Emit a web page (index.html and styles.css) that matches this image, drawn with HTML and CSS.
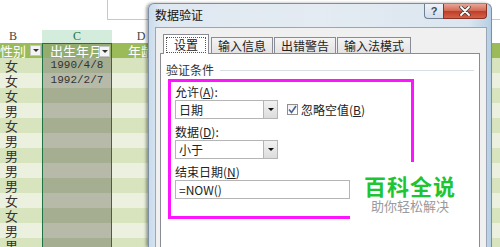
FILE: index.html
```html
<!DOCTYPE html>
<html lang="zh-CN">
<head>
    <meta charset="UTF-8">
    <title>数据验证</title>
    <link rel="stylesheet" href="styles.css">
</head>
<body>
    <div class="sheet">
        <div class="toparea"><div class="fxbox"></div></div>

        <div class="row colhead">
            <div class="cell letter-b">B</div>
            <div class="cell sel">C</div>
            <div class="cell">D</div>
            <div class="cell"></div>
        </div>

        <div class="row hdr">
            <div class="cell">性别<span class="drop"></span></div>
            <div class="cell sel"><span class="clip">出生年月</span><span class="drop"></span></div>
            <div class="cell">年龄</div>
            <div class="cell"></div>
        </div>

        <div class="row odd"><div class="cell">女</div><div class="cell sel date">1990/4/8</div><div class="cell"></div><div class="cell"></div></div>
        <div class="row"><div class="cell">女</div><div class="cell sel date">1992/2/7</div><div class="cell"></div><div class="cell"></div></div>
        <div class="row odd"><div class="cell">女</div><div class="cell sel"></div><div class="cell"></div><div class="cell"></div></div>
        <div class="row"><div class="cell">男</div><div class="cell sel"></div><div class="cell"></div><div class="cell"></div></div>
        <div class="row odd"><div class="cell">女</div><div class="cell sel"></div><div class="cell"></div><div class="cell"></div></div>
        <div class="row"><div class="cell">男</div><div class="cell sel"></div><div class="cell"></div><div class="cell"></div></div>
        <div class="row odd"><div class="cell">男</div><div class="cell sel"></div><div class="cell"></div><div class="cell"></div></div>
        <div class="row"><div class="cell">男</div><div class="cell sel"></div><div class="cell"></div><div class="cell"></div></div>
        <div class="row odd"><div class="cell">男</div><div class="cell sel"></div><div class="cell"></div><div class="cell"></div></div>
        <div class="row"><div class="cell">女</div><div class="cell sel"></div><div class="cell"></div><div class="cell"></div></div>
        <div class="row odd"><div class="cell">女</div><div class="cell sel"></div><div class="cell"></div><div class="cell"></div></div>
        <div class="row"><div class="cell">男</div><div class="cell sel"></div><div class="cell"></div><div class="cell"></div></div>
        <div class="row odd short"><div class="cell">男</div><div class="cell sel"></div><div class="cell"></div><div class="cell"></div></div>
    </div>

    <div class="dlg">
        <div class="titlebar">
            <span class="title">数据验证</span>
            <div class="tbtns">
                <span class="help">?</span>
                <span class="close">
                    <svg width="12" height="10" viewBox="0 0 12 10">
                        <path d="M2 1 L10 9 M10 1 L2 9" stroke="#3b3b3b" stroke-width="3.4" stroke-linecap="round"/>
                        <path d="M2 1 L10 9 M10 1 L2 9" stroke="#fff" stroke-width="1.8" stroke-linecap="round"/>
                    </svg>
                </span>
            </div>
        </div>
        <div class="client">
            <div class="tabs">
                <span class="tab on"><span class="focus">设置</span></span>
                <span class="tab">输入信息</span>
                <span class="tab">出错警告</span>
                <span class="tab">输入法模式</span>
            </div>
            <div class="panel">
                <div class="group"><span>验证条件</span><i class="rule"></i></div>
                <div class="hl">
                    <div class="lbl first">允许(<u>A</u>):</div>
                    <div class="line">
                        <div class="combo"><span>日期</span><i class="btn"><b></b></i></div>
                        <span class="chk">
                            <svg width="9" height="9" viewBox="0 0 9 9"><path d="M1 4.5 L3.5 7.5 L8 1" fill="none" stroke="#4c5f8f" stroke-width="1.6"/></svg>
                        </span>
                        <span class="chklbl">忽略空值(<u>B</u>)</span>
                    </div>
                    <div class="lbl">数据(<u>D</u>):</div>
                    <div class="combo"><span>小于</span><i class="btn"><b></b></i></div>
                    <div class="lbl">结束日期(<u>N</u>)</div>
                    <div class="field">=NOW()</div>
                </div>
            </div>
        </div>
    </div>

    <div class="brand">
        <div class="brand-name">百科全说</div>
        <div class="brand-sub">助你轻松解决</div>
    </div>
</body>
</html>
```

FILE: styles.css
```css
body {
    margin: 0;
    width: 500px;
    height: 247px;
    overflow: hidden;
    background: #fff;
    font-family: "Noto Sans CJK SC", "Liberation Sans", sans-serif;
    font-size: 12px;
    color: #222;
}
.sheet {
    width: 500px;
    height: 247px;
    overflow: hidden;
}
.toparea {
    height: 30px;
}
.fxbox {
    margin-left: 107px;
    height: 20px;
    border-left: 1px solid #c8c8c8;
    border-bottom: 1px solid #c8c8c8;
    box-sizing: border-box;
}
.row {
    display: grid;
    grid-template-columns: 42px 70px 58px 1fr;
    height: 15px;
    background: #ebf1de;
}
.row.odd {
    background: #d8e4bd;
}
.row.short {
    height: 9px;
    overflow: hidden;
}
.cell {
    position: relative;
    box-sizing: border-box;
    padding-left: 5px;
    font-size: 13px;
    line-height: 15px;
    color: #333;
    white-space: nowrap;
}
.sel {
    border-left: 1px solid #217346;
    border-right: 1px solid #217346;
    background: #b7baa9;
}
.row.odd .sel {
    background: #a5ae90;
}
.colhead {
    height: 13px;
    background: #fff;
}
.colhead .cell {
    font-family: "Liberation Serif", serif;
    font-size: 12px;
    line-height: 13px;
    text-align: center;
    padding: 0;
    color: #444;
}
.colhead .letter-b {
    text-align: left;
    padding-left: 9px;
}
.colhead .sel {
    border: none;
    background: #d3ecdc;
    color: #217346;
}
.hdr {
    height: 15px;
    background: #9bbb59;
}
.hdr .cell {
    color: #fff;
    font-size: 13px;
    padding-left: 0;
}
.hdr .sel {
    background: #93ad6f;
    border-top: 1px solid #217346;
    padding-left: 7px;
    line-height: 14px;
}
.hdr .cell:nth-child(3) {
    padding-left: 16px;
}
.clip {
    display: inline-block;
    width: 49px;
    height: 14px;
    overflow: hidden;
    vertical-align: top;
}
.drop {
    position: absolute;
    right: 1px;
    top: 2px;
    width: 11px;
    height: 11px;
    box-sizing: border-box;
    background: #f4f4f4;
    border: 1px solid #c6c6c6;
}
.drop::after {
    content: "";
    position: absolute;
    left: 2px;
    top: 3px;
    border-left: 3px solid transparent;
    border-right: 3px solid transparent;
    border-top: 3px solid #333;
}
.date {
    font-family: "Liberation Mono", monospace;
    font-size: 11px;
    text-align: center;
    padding-left: 0;
}

/* dialog window */
.dlg {
    position: absolute;
    left: 148px;
    top: 3px;
    width: 344px;
    height: 244px;
    box-sizing: border-box;
    border: 1px solid #7d8ea3;
    border-bottom: none;
    border-radius: 6px 6px 0 0;
    background: linear-gradient(to right, #c9dcec 0, #dfe8f1 12px, #e4ebf2 50%, #dbe6f0 320px, #b6cfe4 100%);
    box-shadow: -2px 0 3px rgba(0, 0, 0, 0.35);
}
.titlebar {
    display: flex;
    justify-content: space-between;
    align-items: flex-start;
    height: 23px;
    padding: 0 4px 0 6px;
}
.title {
    line-height: 22px;
    font-size: 12px;
    color: #111;
}
.tbtns {
    display: flex;
}
.help, .close {
    height: 15px;
    box-sizing: border-box;
    border: 1px solid #6f7f93;
    border-top: none;
    display: flex;
    align-items: center;
    justify-content: center;
}
.help {
    width: 19px;
    border-radius: 0 0 0 4px;
    background: linear-gradient(#eef2f7, #d3dde9);
    font-family: "Liberation Sans", sans-serif;
    font-weight: bold;
    font-size: 11px;
    line-height: 14px;
    color: #3d4a5c;
    border-right: none;
}
.close {
    width: 44px;
    border-radius: 0 0 4px 0;
    background: linear-gradient(#e8a597, #d2664f 50%, #c03d25 51%, #d1614a);
    border-color: #8b3224;
}
.client {
    margin-left: 6px;
    width: 332px;
    height: 220px;
    box-sizing: border-box;
    border: 1px solid #98a6b6;
    border-bottom: none;
    background: #f0f0f0;
    padding: 6px 0 0 4px;
}
.tabs {
    display: flex;
    align-items: flex-end;
    height: 19px;
    padding-left: 3px;
    position: relative;
    z-index: 1;
}
.tab {
    height: 16px;
    box-sizing: border-box;
    border: 1px solid #898c95;
    border-bottom: none;
    background: linear-gradient(#f4f4f4, #e3e3e3);
    padding: 0 6px;
    line-height: 15px;
    font-size: 12px;
    color: #222;
    margin-right: 1px;
}
.tab.on {
    height: 20px;
    margin-bottom: -1px;
    background: #fff;
    padding: 2px 2px 0;
    margin-right: 2px;
}
.focus {
    display: block;
    border: 1px dotted #555;
    padding: 0 7px;
    line-height: 14px;
}
.panel {
    width: 320px;
    height: 194px;
    box-sizing: border-box;
    border: 1px solid #898c95;
    border-bottom: none;
    background: #fff;
    padding: 8px 0 0 5px;
}
.group {
    display: flex;
    align-items: center;
    height: 16px;
    line-height: 16px;
    color: #333;
}
.rule {
    flex: 1;
    height: 1px;
    background: #d5dfe5;
    margin: 0 5px 0 6px;
}
.hl {
    margin: 1px 0 0 2px;
    width: 246px;
    height: 140px;
    box-sizing: border-box;
    border: 3px solid #ff14ff;
    padding: 0 0 0 4px;
}
.lbl {
    margin-top: 4px;
    line-height: 17px;
    color: #222;
}
.lbl.first {
    margin-top: 2px;
    line-height: 16px;
}
u {
    text-decoration: underline;
}
.line {
    display: flex;
    align-items: center;
}
.combo {
    width: 103px;
    height: 19px;
    box-sizing: border-box;
    border: 1px solid #b5b5b5;
    background: #fff;
    display: flex;
    justify-content: space-between;
}
.combo span {
    padding-left: 3px;
    line-height: 17px;
}
.btn {
    width: 13px;
    border-left: 1px solid #b5b5b5;
    background: linear-gradient(#f2f2f2, #dcdcdc);
    position: relative;
}
.btn b {
    position: absolute;
    left: 4px;
    top: 7px;
    border-left: 3px solid transparent;
    border-right: 3px solid transparent;
    border-top: 3px solid #111;
}
.chk {
    width: 11px;
    height: 11px;
    box-sizing: border-box;
    border: 1px solid #8f8f8f;
    background: linear-gradient(#f0f0f0, #fff);
    margin-left: 9px;
    display: flex;
    align-items: center;
    justify-content: center;
}
.chklbl {
    margin-left: 3px;
}
.field {
    width: 175px;
    height: 19px;
    box-sizing: border-box;
    border: 1px solid #b5b5b5;
    padding-left: 3px;
    line-height: 17px;
}
.brand {
    position: absolute;
    left: 350px;
    top: 162px;
    width: 120px;
    height: 62px;
    background: #fff;
    text-align: center;
}
.brand-name {
    margin-top: 10px;
    font-size: 22px;
    font-weight: bold;
    line-height: 26px;
    color: #1ec431;
    letter-spacing: 1px;
}
.brand-sub {
    font-size: 13px;
    line-height: 16px;
    color: #9a9a9a;
}
```
